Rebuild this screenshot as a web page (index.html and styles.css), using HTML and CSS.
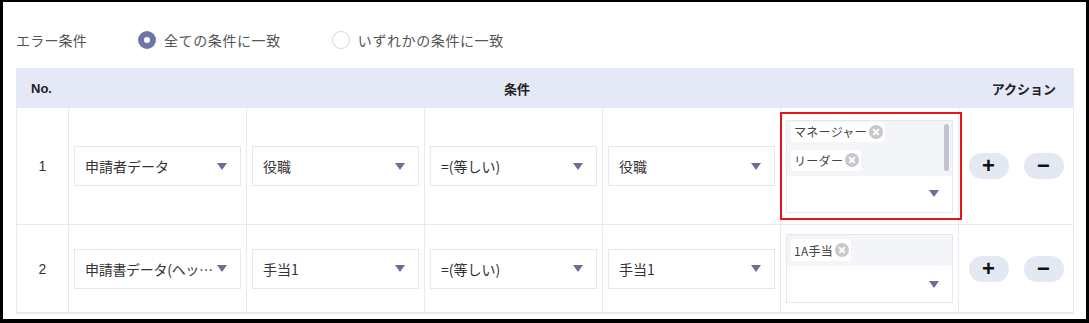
FILE: index.html
```html
<!DOCTYPE html>
<html lang="ja">
<head>
    <meta charset="UTF-8">
    <title>エラー条件</title>
    <link rel="stylesheet" href="styles.css">
</head>
<body>

<div class="frame">
    <!-- Match mode -->
    <div class="match-row">
        <span class="match-label">エラー条件</span>
        <label class="radio checked"><span class="radio-dot"></span>全ての条件に一致</label>
        <label class="radio"><span class="radio-dot"></span>いずれかの条件に一致</label>
    </div>

    <!-- Conditions table -->
    <div class="cond-table">
        <div class="cond-head">
            <div class="head-no">No.</div>
            <div class="head-cond">条件</div>
            <div class="head-action">アクション</div>
        </div>

        <div class="cond-row row-tall">
            <div class="cell cell-no">1</div>
            <div class="cell"><div class="select"><span class="select-text">申請者データ</span><span class="arrow"></span></div></div>
            <div class="cell"><div class="select"><span class="select-text">役職</span><span class="arrow"></span></div></div>
            <div class="cell"><div class="select"><span class="select-text">=(等しい)</span><span class="arrow"></span></div></div>
            <div class="cell"><div class="select"><span class="select-text">役職</span><span class="arrow"></span></div></div>
            <div class="cell cell-value">
                <div class="multi">
                    <div class="tags tags-scroll">
                        <span class="tag">マネージャー<span class="tag-x"></span></span>
                        <span class="tag">リーダー<span class="tag-x"></span></span>
                        <span class="scrollbar"></span>
                    </div>
                    <div class="multi-input"><span class="arrow"></span></div>
                </div>
                <div class="highlight"></div>
            </div>
            <div class="cell cell-action">
                <button class="pill">+</button>
                <button class="pill">−</button>
            </div>
        </div>

        <div class="cond-row">
            <div class="cell cell-no">2</div>
            <div class="cell"><div class="select select-tight"><span class="select-text">申請書データ(ヘッ…</span><span class="arrow"></span></div></div>
            <div class="cell"><div class="select"><span class="select-text">手当1</span><span class="arrow"></span></div></div>
            <div class="cell"><div class="select"><span class="select-text">=(等しい)</span><span class="arrow"></span></div></div>
            <div class="cell"><div class="select"><span class="select-text">手当1</span><span class="arrow"></span></div></div>
            <div class="cell cell-value">
                <div class="multi">
                    <div class="tags">
                        <span class="tag">1A手当<span class="tag-x"></span></span>
                    </div>
                    <div class="multi-input"><span class="arrow"></span></div>
                </div>
            </div>
            <div class="cell cell-action">
                <button class="pill">+</button>
                <button class="pill">−</button>
            </div>
        </div>
    </div>
</div>

</body>
</html>
```
FILE: styles.css
```css
* {
    box-sizing: border-box;
}

body {
    margin: 0;
    font-family: 'Noto Sans CJK JP', 'Liberation Sans', sans-serif;
    color: #333;
    background: #fff;
}

/* black screenshot frame */
.frame {
    width: 1089px;
    height: 323px;
    border-style: solid;
    border-color: #000;
    border-width: 2px 3px 4px 3px;
    padding: 26px 12px 0 13px;
    overflow: hidden;
}

.match-row {
    display: flex;
    align-items: center;
    height: 24px;
    font-size: 14px;
    color: #555;
}

.match-label {
    margin-right: 51px;
    letter-spacing: 0.2px;
}

.radio {
    display: flex;
    align-items: center;
    gap: 8px;
    margin-right: 51px;
    letter-spacing: 0.6px;
}

.radio-dot {
    width: 18px;
    height: 18px;
    border-radius: 50%;
    border: 1px solid #d6d8e0;
    background: #fff;
}

.radio.checked .radio-dot {
    border: 6px solid #6f76a6;
    background: #fff;
}

.cond-table {
    margin-top: 16px;
    border: 1px solid #e7e9f4;
    border-top: none;
    width: 1058px;
}

.cond-head {
    display: grid;
    grid-template-columns: 52px 890px 114px;
    height: 40px;
    margin: 0 -1px;
    background: #e5e8f6;
    align-items: center;
    font-size: 13px;
    font-weight: bold;
    color: #222;
}

.head-no {
    padding-left: 15px;
    font-family: 'Liberation Sans', sans-serif;
}

.head-cond {
    text-align: center;
    padding-left: 8px;
}

.head-action {
    text-align: right;
    padding-right: 16px;
}

.cond-row {
    display: grid;
    grid-template-columns: 52px repeat(5, 178px) 114px;
    height: 88px;
    border-bottom: 1px solid #e7e9f4;
}

.cond-row.row-tall {
    height: 117px;
}

.cell {
    display: flex;
    align-items: center;
    padding: 0 5px;
    border-right: 1px solid #e7e9f4;
    position: relative;
}

.cell-no {
    justify-content: center;
    font-family: 'Liberation Sans', sans-serif;
    font-size: 14px;
    color: #333;
}

.cell-action {
    border-right: none;
    justify-content: center;
    gap: 15px;
}

.select {
    width: 167px;
    height: 40px;
    border: 1px solid #e6e7ec;
    background: #fff;
    display: flex;
    align-items: center;
    padding: 0 13px 0 10px;
    font-size: 14px;
    color: #333;
}

.select-text {
    flex: 1;
    white-space: nowrap;
    margin-right: 6px;
}

.select-tight .select-text {
    margin-right: 2px;
    letter-spacing: -0.3px;
}

.arrow {
    flex: none;
    width: 0;
    height: 0;
    border-left: 5px solid transparent;
    border-right: 5px solid transparent;
    border-top: 7px solid #6b6e98;
}

/* multi value select */
.multi {
    width: 167px;
    border: 1px solid #e6e7ec;
    background: #fff;
}

.tags {
    background: #f4f5f9;
    padding: 4px 4px 5px;
    display: flex;
    flex-direction: column;
    align-items: flex-start;
    gap: 8px;
    position: relative;
}

.tags-scroll {
    height: 55px;
    padding-top: 1px;
    overflow: hidden;
}

.scrollbar {
    position: absolute;
    right: 3px;
    top: 3px;
    width: 5px;
    height: 47px;
    border-radius: 3px;
    background: #c1c3d0;
}

.tag {
    display: inline-flex;
    align-items: center;
    height: 22px;
    padding: 0 2px 0 3px;
    gap: 2px;
    background: #fff;
    border-radius: 3px;
    font-size: 12px;
    letter-spacing: 0.3px;
    color: #444;
}

.tag-x {
    width: 14px;
    height: 14px;
    border-radius: 50%;
    background: #c8c8ca;
    position: relative;
}

.tag-x::before,
.tag-x::after {
    content: "";
    position: absolute;
    left: 3px;
    top: 6px;
    width: 8px;
    height: 1.6px;
    background: #fff;
    transform: rotate(45deg);
}

.tag-x::after {
    transform: rotate(-45deg);
}

.multi-input {
    height: 36px;
    display: flex;
    align-items: center;
    justify-content: flex-end;
    padding-right: 13px;
}

/* red annotation box */
.highlight {
    position: absolute;
    left: -1px;
    top: 4px;
    width: 182px;
    height: 108px;
    border: 2px solid #e8141b;
    pointer-events: none;
}

.pill {
    width: 40px;
    height: 26px;
    border: none;
    border-radius: 13px;
    background: #e3e8f3;
    font-family: 'Liberation Sans', sans-serif;
    font-size: 22px;
    font-weight: bold;
    line-height: 26px;
    padding: 0;
    color: #111;
}
```
